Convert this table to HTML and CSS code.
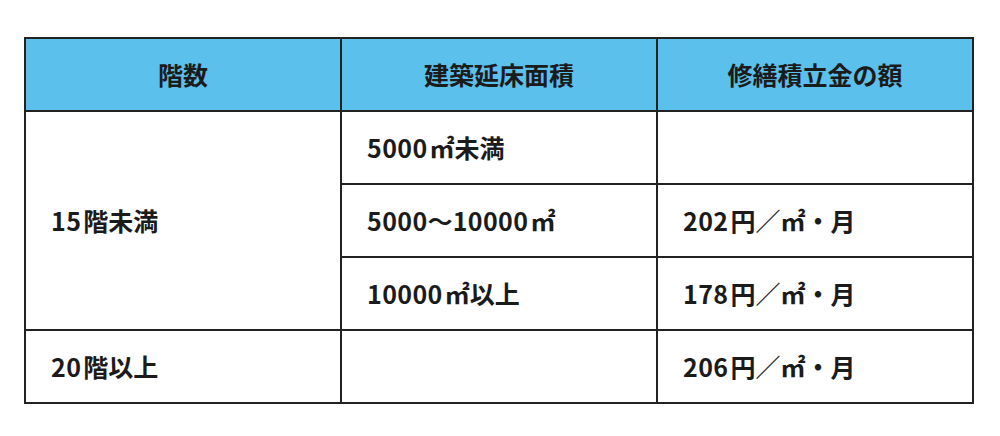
FILE: index.html
```html
<!DOCTYPE html>
<html lang="ja">
<head>
<meta charset="utf-8">
<link rel="stylesheet" href="styles.css">
</head>
<body>
<div class="wrap">
<table class="fee-table">
  <colgroup><col class="c"><col class="c"><col class="c"></colgroup>
  <thead>
    <tr><th>階数</th><th>建築延床面積</th><th>修繕積立金の額</th></tr>
  </thead>
  <tbody>
    <tr><td rowspan="3"><span class="num">15</span>階未満</td><td><span class="num">5000</span>㎡未満</td><td></td></tr>
    <tr><td><span class="num tight">5000</span>～<span class="num">10000</span>㎡</td><td><span class="num">202</span>円／㎡・月</td></tr>
    <tr><td><span class="num">10000</span>㎡以上</td><td><span class="num">178</span>円／㎡・月</td></tr>
    <tr><td><span class="num">20</span>階以上</td><td></td><td><span class="num">206</span>円／㎡・月</td></tr>
  </tbody>
</table>
</div>
</body>
</html>
```
FILE: styles.css
```css
html, body {
  margin: 0;
  padding: 0;
  background: #ffffff;
}
.wrap {
  padding: 37px 0 0 24px;
}
.fee-table {
  border-collapse: collapse;
  width: 950px;
  table-layout: fixed;
  font-family: "Noto Sans CJK JP", "Noto Sans", sans-serif;
  font-weight: 700;
  font-size: 25px;
  color: #1b1b1b;
}
.fee-table th,
.fee-table td {
  border: 2px solid #222222;
  height: 73px;
  padding: 0 0 0 25px;
  box-sizing: border-box;
  vertical-align: middle;
  text-align: left;
  line-height: 1;
}
.fee-table th {
  background: #5bc0eb;
  text-align: center;
  padding: 0;
}
.num {
  letter-spacing: 0.4px;
  margin-right: 2px;
}
.num.tight {
  margin-right: 0;
}
```
